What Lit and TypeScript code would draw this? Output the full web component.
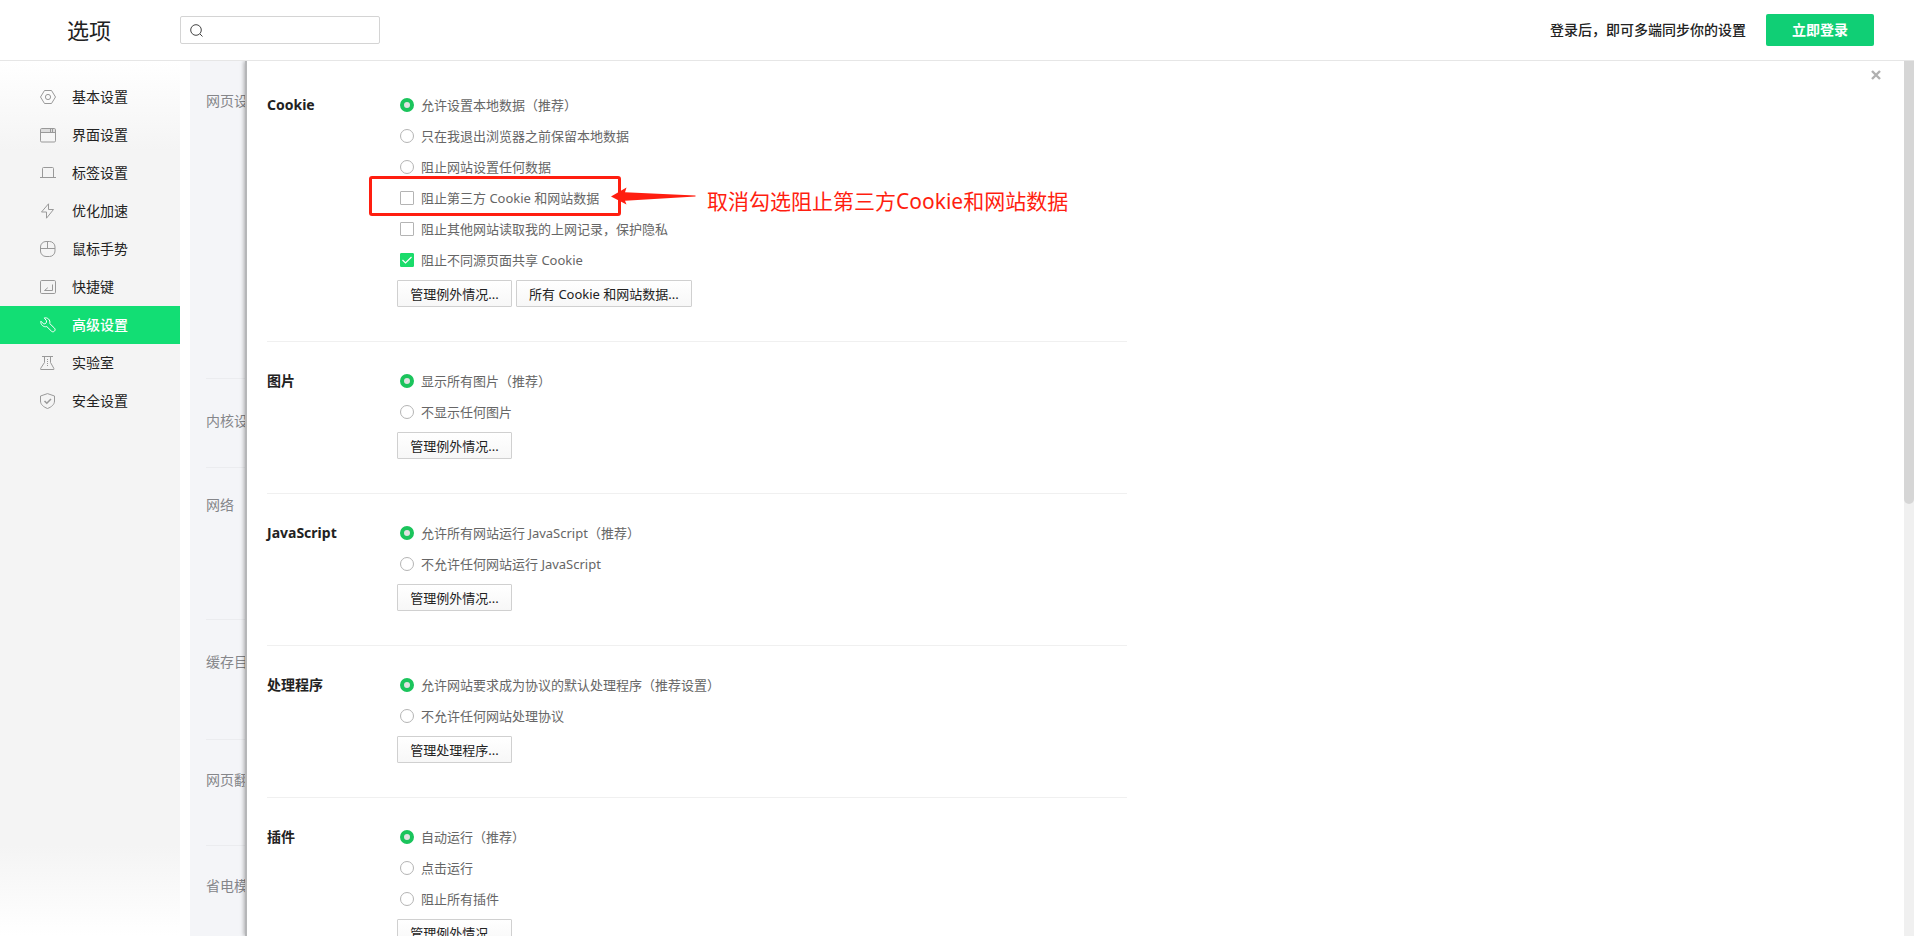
import { LitElement, html, css, svg } from "lit";
import { customElement, property } from "lit/decorators.js";

type Option = { kind: "radio" | "checkbox"; text: string; on?: boolean; marked?: boolean };
type Section = { id: string; title: string; options: Option[]; buttons: string[] };

const NOTE = "取消勾选阻止第三方Cookie和网站数据";

const SECTIONS: Section[] = [
  {
    id: "cookie",
    title: "Cookie",
    options: [
      { kind: "radio", text: "允许设置本地数据（推荐）", on: true },
      { kind: "radio", text: "只在我退出浏览器之前保留本地数据" },
      { kind: "radio", text: "阻止网站设置任何数据" },
      { kind: "checkbox", text: "阻止第三方 Cookie 和网站数据", marked: true },
      { kind: "checkbox", text: "阻止其他网站读取我的上网记录，保护隐私" },
      { kind: "checkbox", text: "阻止不同源页面共享 Cookie", on: true },
    ],
    buttons: ["管理例外情况...", "所有 Cookie 和网站数据..."],
  },
  {
    id: "image",
    title: "图片",
    options: [
      { kind: "radio", text: "显示所有图片（推荐）", on: true },
      { kind: "radio", text: "不显示任何图片" },
    ],
    buttons: ["管理例外情况..."],
  },
  {
    id: "js",
    title: "JavaScript",
    options: [
      { kind: "radio", text: "允许所有网站运行 JavaScript（推荐）", on: true },
      { kind: "radio", text: "不允许任何网站运行 JavaScript" },
    ],
    buttons: ["管理例外情况..."],
  },
  {
    id: "handler",
    title: "处理程序",
    options: [
      { kind: "radio", text: "允许网站要求成为协议的默认处理程序（推荐设置）", on: true },
      { kind: "radio", text: "不允许任何网站处理协议" },
    ],
    buttons: ["管理处理程序..."],
  },
  {
    id: "plugin",
    title: "插件",
    options: [
      { kind: "radio", text: "自动运行（推荐）", on: true },
      { kind: "radio", text: "点击运行" },
      { kind: "radio", text: "阻止所有插件" },
    ],
    buttons: ["管理例外情况..."],
  },
];

const NAV = [
  { icon: "hex", text: "基本设置" },
  { icon: "window", text: "界面设置" },
  { icon: "tab", text: "标签设置" },
  { icon: "bolt", text: "优化加速" },
  { icon: "mouse", text: "鼠标手势" },
  { icon: "key", text: "快捷键" },
  { icon: "wrench", text: "高级设置", active: true },
  { icon: "flask", text: "实验室" },
  { icon: "shield", text: "安全设置" },
];

const BACKDROP = [
  { text: "网页设置", height: 318, space: "normal" },
  { text: "内核设置", height: 89, space: "roomy" },
  { text: "网络", height: 152, space: "tight" },
  { text: "缓存目录", height: 120, space: "roomy" },
  { text: "网页翻译", height: 106, space: "normal" },
  { text: "省电模式", height: 120, space: "normal" },
];

const ICONS: Record<string, unknown> = {
  hex: svg`<path d="M4.500 1.500h7L15.500 8l-4 6.500h-7L.5 8z"/><circle cx="8" cy="8" r="2.600"/>`,
  window: svg`<path d="M1 2h14v3H1z" fill="#ddd" stroke="none"/><rect x=".5" y="1.500" width="15" height="13.500" rx="1.200"/><path d="M.5 5.500h15M10.500 1.500v4M12.500 1.500v4"/>`,
  tab: svg`<path d="M0 12.500h16M2.500 12.500v-9a1 1 0 0 1 1-1h9a1 1 0 0 1 1 1v9"/>`,
  bolt: svg`<path d="M8.500.8 1.500 9h5v6.200L13.500 6.500h-5z"/>`,
  mouse: svg`<rect x=".5" y=".5" width="14.500" height="15" rx="5.500"/><path d="M.5 7.500h14.500M7.500.5v7"/>`,
  key: svg`<rect x=".5" y="1.500" width="15" height="13" rx="1.200"/><path d="M12.500 5.500v6H4.500l3.300-2.800"/>`,
  wrench: svg`<path d="M4.300.9C7.500.2 10.800 3 9.700 6.500l4.800 4.700c1.800 1.800-.8 4.800-2.900 3.100L6.800 9.600C3.500 10.500.2 7.500.9 4.200l2.600 2.600c1.800.6 3.500-1.200 3-3z"/>`,
  flask: svg`<path d="M2 1.500h11M4.500 1.500v6L.7 13.300v1.200h13.100v-1.200L10.500 7.500v-6"/><path d="M7.500 4v8" stroke-dasharray="1 1"/>`,
  shield: svg`<path d="M7.500.6 14.500 3v5c0 3.500-3 6-7 7.500C3.500 14 .5 11.500.5 8V3z"/><path d="m4.500 8 2.300 2.300 4.200-4.300" stroke-width="1.500"/>`,
};

const FONT = css`"Noto Sans", "Noto Sans CJK SC", sans-serif`;

@customElement("option-row")
class OptionRow extends LitElement {
  @property({ attribute: false }) option!: Option;
  @property() group = "";

  static styles = css`
    :host { display: flex; align-items: center; height: 31px; }
    .wrap { position: relative; display: flex; align-items: center; }
    label { display: flex; align-items: center; gap: 7px; line-height: 20px; white-space: nowrap; }
    input {
      appearance: none; flex: none; box-sizing: border-box; margin: 0;
      width: 14px; height: 14px; border: 1px solid #b4b4b4; background: #fff;
    }
    .radio { border-radius: 50%; }
    .radio:checked { border: 4px solid #1bc45c; background: #e2e2e2; }
    .checkbox { border-radius: 1px; }
    .checkbox:checked {
      border-color: #1bdc6b;
      background: #1bdc6b url("data:image/svg+xml,%3Csvg xmlns='http://www.w3.org/2000/svg' viewBox='0 0 12 12'%3E%3Cpath d='M1.500 6l3 3 6-6' fill='none' stroke='white' stroke-width='1.200'/%3E%3C/svg%3E") center / 12px;
    }
    .frame {
      position: absolute; left: -31px; top: -12px; bottom: -8px; width: 252px;
      box-sizing: border-box; border: 3px solid #ff1e10; border-radius: 3px; pointer-events: none;
    }
    .callout {
      position: absolute; left: 211px; top: -1px; display: flex; gap: 11px;
      color: #ff1e10; font-size: 21px; line-height: 28px; white-space: nowrap; pointer-events: none;
    }
    .arrow { display: block; width: 85px; height: 18px; flex: none; }
  `;

  render() {
    const o = this.option;
    return html`<div class="wrap">
      <label><input class=${o.kind} type=${o.kind} name=${this.group} ?checked=${o.on}>${o.text}</label>
      ${o.marked
        ? html`<div class="frame"></div>
            <div class="callout">
              <svg class="arrow" viewBox="0 0 85 18" fill="currentColor" aria-hidden="true">
                <path d="M0 9.500 15.500.5 14 5.300 84.500 8.500v1L14 13.800l1.500 3.700z" />
              </svg>
              <span>${NOTE}</span>
            </div>`
        : ""}
    </div>`;
  }
}

@customElement("app-root")
class AppRoot extends LitElement {
  static styles = css`
    :host {
      display: flex; flex-direction: column; height: 100vh; overflow: hidden;
      background: #fff; color: #222; font: 14px/20px ${FONT};
    }
    * { box-sizing: border-box; }
    header {
      flex: none; display: flex; align-items: center; height: 61px;
      padding: 0 40px 0 67px; border-bottom: 1px solid #e6e6e6;
    }
    h1 { margin: 0; width: 113px; font-size: 22px; line-height: 30px; font-weight: 400; }
    .search {
      display: flex; align-items: center; gap: 6px; width: 200px; height: 28px;
      padding: 0 9px; border: 1px solid #d4d4d4; border-radius: 2px;
    }
    .search svg { flex: none; width: 13px; height: 13px; fill: none; stroke: #444; }
    .search input { flex: 1; min-width: 0; border: 0; padding: 0; outline: 0; font: inherit; background: none; }
    .sync { margin-left: auto; font-weight: 500; }
    .login {
      width: 108px; height: 32px; margin-left: 20px; border: 0; border-radius: 2px;
      background: #10cf75; color: #fff; font: 700 14px/20px ${FONT};
    }
    .body { flex: 1; min-height: 0; display: flex; }
    nav {
      flex: none; width: 180px; padding-top: 17px;
      background: linear-gradient(#fff, #f4f4f4 90px, #f4f4f4 calc(100% - 90px), #fff);
    }
    .item {
      display: flex; align-items: center; gap: 16px; height: 38px; padding-left: 40px;
      color: #222; text-decoration: none;
    }
    .item svg { width: 16px; height: 16px; fill: none; stroke: #999; }
    .active { background: #12de74; color: #fff; font-weight: 500; }
    .active svg { stroke: #fff; }
    .backdrop {
      flex: none; width: 57px; margin-left: 10px; padding-left: 16px; overflow: hidden;
      background: #f4f5f8; color: #85868a; white-space: nowrap;
    }
    .behind { border-bottom: 1px solid #ebecef; }
    .tight { padding-top: 27px; }
    .normal { padding-top: 30px; }
    .roomy { padding-top: 32px; }
    .panel {
      position: relative; flex: 1; min-width: 0; padding: 5px 20px 0; background: #fff;
      box-shadow: -2px 0 0 #b5b6b8, -3px 0 4px rgba(0, 0, 0, 0.3);
      clip-path: inset(0 0 0 -10px);
    }
    .close {
      position: absolute; top: 6px; right: 20px; width: 16px; height: 16px; padding: 3px;
      border: 0; background: none;
    }
    .close svg { display: block; width: 10px; height: 10px; stroke: #b0b0b0; stroke-width: 2.400; }
    section {
      display: flex; max-width: 860px; padding: 23px 0 34px; border-bottom: 1px solid #f0f0f0;
    }
    h2 { flex: none; width: 130px; margin: 0; font-size: 14px; line-height: 31px; font-weight: 700; }
    .fields { font-size: 13px; color: #666; }
    option-row { padding-left: 3px; }
    .buttons { display: flex; gap: 4px; padding-top: 5px; }
    .buttons button {
      min-width: 115px; height: 27px; padding: 0 12px; border: 1px solid #d0d0d0; border-radius: 1px;
      background: linear-gradient(#fff, #f7f7f7); color: #222; font: 13px/20px ${FONT}; white-space: nowrap;
    }
    .track { flex: none; width: 10px; background: #f0f0f0; }
    .thumb { height: 443px; background: #d6d6d6; border-radius: 0 0 5px 5px; }
  `;

  render() {
    return html`
      <header>
        <h1>选项</h1>
        <label class="search">
          <svg viewBox="0 0 13 13" aria-hidden="true"><circle cx="6" cy="6" r="5.300" /><path d="m10 10 2.500 2.500" /></svg>
          <input type="search" aria-label="搜索">
        </label>
        <span class="sync">登录后，即可多端同步你的设置</span>
        <button class="login">立即登录</button>
      </header>
      <div class="body">
        <nav>
          ${NAV.map(
            (n) => html`<a class="item ${n.active ? "active" : ""}" href="#">
              <svg viewBox="0 0 16 16" aria-hidden="true">${ICONS[n.icon]}</svg>${n.text}</a>`
          )}
        </nav>
        <div class="backdrop" aria-hidden="true">
          ${BACKDROP.map((b) => html`<div class="behind ${b.space}" style="height:${b.height}px">${b.text}</div>`)}
        </div>
        <main class="panel">
          <button class="close" aria-label="关闭"><svg viewBox="0 0 10 10"><path d="m1 1 8 8M9 1 1 9" /></svg></button>
          ${SECTIONS.map(
            (s) => html`<section>
              <h2>${s.title}</h2>
              <div class="fields">
                ${s.options.map((o) => html`<option-row .option=${o} group=${s.id}></option-row>`)}
                <div class="buttons">${s.buttons.map((b) => html`<button>${b}</button>`)}</div>
              </div>
            </section>`
          )}
        </main>
        <div class="track"><div class="thumb"></div></div>
      </div>
    `;
  }
}
